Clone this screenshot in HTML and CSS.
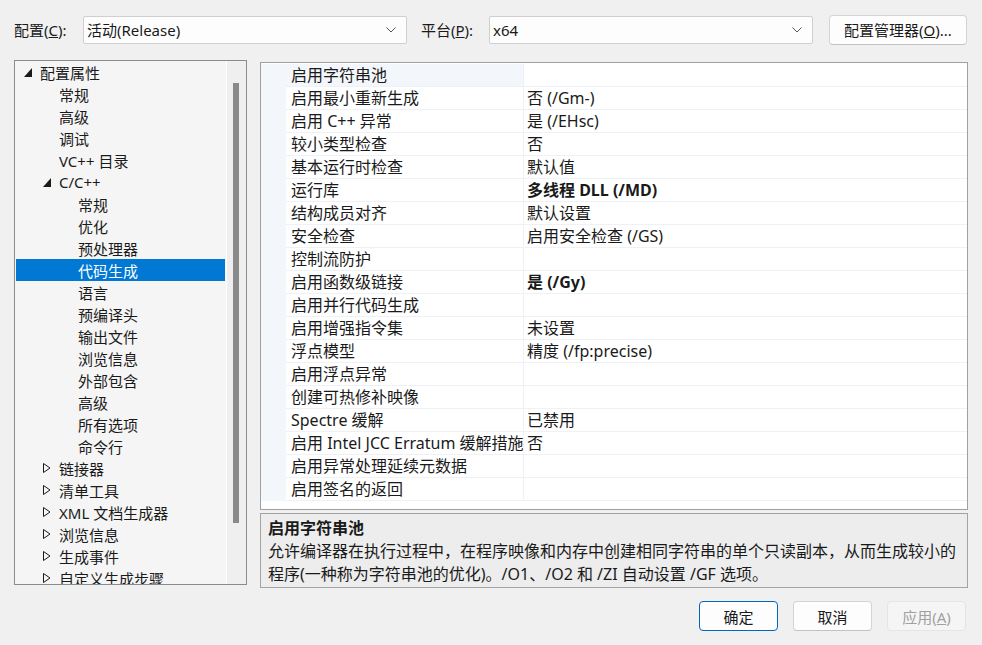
FILE: index.html
```html
<!DOCTYPE html>
<html lang="zh-CN">
<head>
    <meta charset="UTF-8">
    <title>代码生成 属性页</title>
    <link rel="stylesheet" href="styles.css">
</head>
<body>
    <div class="toolbar">
        <label class="tb-label">配置(<u>C</u>):</label>
        <div class="combo">
            <span>活动(Release)</span>
            <svg class="chev" width="10" height="6" viewBox="0 0 10 6"><polyline points="0.5,0.5 5,5 9.5,0.5" fill="none" stroke="#555" stroke-width="1"/></svg>
        </div>
        <label class="tb-label plat">平台(<u>P</u>):</label>
        <div class="combo">
            <span>x64</span>
            <svg class="chev" width="10" height="6" viewBox="0 0 10 6"><polyline points="0.5,0.5 5,5 9.5,0.5" fill="none" stroke="#555" stroke-width="1"/></svg>
        </div>
        <button class="btn cfg-btn">配置管理器(<u>O</u>)...</button>
    </div>

    <div class="main">
        <div class="tree">
            <div class="tree-rows">
                <div class="node lv0"><span class="tg"><svg width="8" height="9" viewBox="0 0 8 9"><polygon points="8,0 8,9 0,9" fill="#1a1a1a"/></svg></span>配置属性</div>
                <div class="node lv1"><span class="tg"></span>常规</div>
                <div class="node lv1"><span class="tg"></span>高级</div>
                <div class="node lv1"><span class="tg"></span>调试</div>
                <div class="node lv1"><span class="tg"></span>VC++ 目录</div>
                <div class="node lv1"><span class="tg"><svg width="8" height="9" viewBox="0 0 8 9"><polygon points="8,0 8,9 0,9" fill="#1a1a1a"/></svg></span>C/C++</div>
                <div class="node lv2"><span class="tg"></span>常规</div>
                <div class="node lv2"><span class="tg"></span>优化</div>
                <div class="node lv2"><span class="tg"></span>预处理器</div>
                <div class="node lv2 selected"><span class="tg"></span>代码生成</div>
                <div class="node lv2"><span class="tg"></span>语言</div>
                <div class="node lv2"><span class="tg"></span>预编译头</div>
                <div class="node lv2"><span class="tg"></span>输出文件</div>
                <div class="node lv2"><span class="tg"></span>浏览信息</div>
                <div class="node lv2"><span class="tg"></span>外部包含</div>
                <div class="node lv2"><span class="tg"></span>高级</div>
                <div class="node lv2"><span class="tg"></span>所有选项</div>
                <div class="node lv2"><span class="tg"></span>命令行</div>
                <div class="node lv1"><span class="tg"><svg width="8" height="10" viewBox="0 0 8 10"><polygon points="0.5,0.5 7,5 0.5,9.5" fill="none" stroke="#1a1a1a" stroke-width="1"/></svg></span>链接器</div>
                <div class="node lv1"><span class="tg"><svg width="8" height="10" viewBox="0 0 8 10"><polygon points="0.5,0.5 7,5 0.5,9.5" fill="none" stroke="#1a1a1a" stroke-width="1"/></svg></span>清单工具</div>
                <div class="node lv1"><span class="tg"><svg width="8" height="10" viewBox="0 0 8 10"><polygon points="0.5,0.5 7,5 0.5,9.5" fill="none" stroke="#1a1a1a" stroke-width="1"/></svg></span>XML 文档生成器</div>
                <div class="node lv1"><span class="tg"><svg width="8" height="10" viewBox="0 0 8 10"><polygon points="0.5,0.5 7,5 0.5,9.5" fill="none" stroke="#1a1a1a" stroke-width="1"/></svg></span>浏览信息</div>
                <div class="node lv1"><span class="tg"><svg width="8" height="10" viewBox="0 0 8 10"><polygon points="0.5,0.5 7,5 0.5,9.5" fill="none" stroke="#1a1a1a" stroke-width="1"/></svg></span>生成事件</div>
                <div class="node lv1"><span class="tg"><svg width="8" height="10" viewBox="0 0 8 10"><polygon points="0.5,0.5 7,5 0.5,9.5" fill="none" stroke="#1a1a1a" stroke-width="1"/></svg></span>自定义生成步骤</div>
            </div>
            <div class="vscroll"><div class="thumb"></div></div>
        </div>

        <div class="right">
            <div class="grid">
                <div class="row current"><div class="gut"></div><div class="name">启用字符串池</div><div class="val"></div></div>
                <div class="row"><div class="gut"></div><div class="name">启用最小重新生成</div><div class="val">否 (/Gm-)</div></div>
                <div class="row"><div class="gut"></div><div class="name">启用 C++ 异常</div><div class="val">是 (/EHsc)</div></div>
                <div class="row"><div class="gut"></div><div class="name">较小类型检查</div><div class="val">否</div></div>
                <div class="row"><div class="gut"></div><div class="name">基本运行时检查</div><div class="val">默认值</div></div>
                <div class="row"><div class="gut"></div><div class="name">运行库</div><div class="val bold">多线程 DLL (/MD)</div></div>
                <div class="row"><div class="gut"></div><div class="name">结构成员对齐</div><div class="val">默认设置</div></div>
                <div class="row"><div class="gut"></div><div class="name">安全检查</div><div class="val">启用安全检查 (/GS)</div></div>
                <div class="row"><div class="gut"></div><div class="name">控制流防护</div><div class="val"></div></div>
                <div class="row"><div class="gut"></div><div class="name">启用函数级链接</div><div class="val bold">是 (/Gy)</div></div>
                <div class="row"><div class="gut"></div><div class="name">启用并行代码生成</div><div class="val"></div></div>
                <div class="row"><div class="gut"></div><div class="name">启用增强指令集</div><div class="val">未设置</div></div>
                <div class="row"><div class="gut"></div><div class="name">浮点模型</div><div class="val">精度 (/fp:precise)</div></div>
                <div class="row"><div class="gut"></div><div class="name">启用浮点异常</div><div class="val"></div></div>
                <div class="row"><div class="gut"></div><div class="name">创建可热修补映像</div><div class="val"></div></div>
                <div class="row"><div class="gut"></div><div class="name">Spectre 缓解</div><div class="val">已禁用</div></div>
                <div class="row"><div class="gut"></div><div class="name">启用 Intel JCC Erratum 缓解措施</div><div class="val">否</div></div>
                <div class="row"><div class="gut"></div><div class="name">启用异常处理延续元数据</div><div class="val"></div></div>
                <div class="row"><div class="gut"></div><div class="name">启用签名的返回</div><div class="val"></div></div>
            </div>
            <div class="desc">
                <div class="desc-title">启用字符串池</div>
                <div class="desc-text">允许编译器在执行过程中，在程序映像和内存中创建相同字符串的单个只读副本，从而生成较小的程序(一种称为字符串池的优化)。/O1、/O2 和 /ZI 自动设置 /GF 选项。</div>
            </div>
        </div>
    </div>

    <div class="footer">
        <button class="btn default">确定</button>
        <button class="btn">取消</button>
        <button class="btn disabled">应用(<u>A</u>)</button>
    </div>
</body>
</html>
```

FILE: styles.css
```css
body {
    margin: 0;
    width: 982px;
    height: 645px;
    overflow: hidden;
    background-color: #f0f0f0;
    color: #1a1a1a;
    font-family: "Noto Sans", "Noto Sans CJK SC", sans-serif;
    font-size: 15px;
}

/* top bar */
.toolbar {
    display: flex;
    align-items: center;
    height: 59px;
    padding-left: 14px;
}

.tb-label {
    width: 69px;
}

.tb-label.plat {
    width: 68px;
    margin-left: 14px;
}

.combo {
    box-sizing: border-box;
    width: 324px;
    height: 28px;
    display: flex;
    align-items: center;
    justify-content: space-between;
    padding: 0 10px 0 3px;
    background-color: #fdfdfd;
    border: 1px solid #cfcfcf;
    border-radius: 2px;
}

.chev {
    display: block;
}

.btn {
    box-sizing: border-box;
    width: 79px;
    height: 30px;
    font-family: inherit;
    font-size: 15px;
    color: #1a1a1a;
    background-color: #fdfdfd;
    border: 1px solid #d4d4d4;
    border-bottom-color: #c2c2c2;
    border-radius: 4px;
    padding: 0;
}

.cfg-btn {
    width: 138px;
    margin-left: 16px;
}

/* main */
.main {
    display: flex;
    height: 530px;
}

.tree {
    box-sizing: border-box;
    width: 233px;
    height: 525px;
    margin-top: 1px;
    margin-left: 14px;
    border: 1px solid #878c93;
    background-color: #f5f5f5;
    display: flex;
    overflow: hidden;
}

.tree-rows {
    flex: 1;
    padding: 0 1px;
    border-right: 1px solid #ffffff;
    overflow: hidden;
}

.node {
    display: flex;
    align-items: center;
    height: 22px;
    white-space: nowrap;
}

.node.lv0 { padding-left: 8px; }
.node.lv1 { padding-left: 27px; }
.node.lv2 { padding-left: 46px; }

.node.selected {
    background-color: #0078d4;
    color: #ffffff;
}

.tg {
    width: 16px;
    flex-shrink: 0;
    display: flex;
    align-items: center;
}

.tg svg {
    display: block;
}

.vscroll {
    width: 19px;
    background-color: #efefef;
    position: relative;
}

.thumb {
    position: absolute;
    left: 6px;
    top: 22px;
    width: 6px;
    height: 440px;
    background-color: #8a8a8a;
}

.right {
    margin-left: 13px;
    width: 708px;
    padding-top: 3px;
}

.grid {
    box-sizing: border-box;
    height: 448px;
    padding-top: 1px;
    border: 1px solid #a0a0a0;
    background-color: #ffffff;
    font-size: 16px;
}

.row {
    display: flex;
    height: 23px;
    line-height: 23px;
}

.gut {
    width: 25px;
    flex-shrink: 0;
    background-color: #f3f6fb;
}

.name {
    box-sizing: border-box;
    width: 238px;
    flex-shrink: 0;
    padding-left: 5px;
    white-space: nowrap;
    overflow: hidden;
    border-bottom: 1px solid #eef1f6;
    border-right: 1px solid #eef1f6;
}

.val {
    flex: 1;
    padding-left: 3px;
    white-space: nowrap;
    border-bottom: 1px solid #eef1f6;
}

.row.current .name {
    background-color: #f3f6fb;
}

.bold {
    font-weight: bold;
}

.desc {
    box-sizing: border-box;
    height: 75px;
    margin-top: 3px;
    padding: 3px 8px 0 7px;
    border: 1px solid #a3a3a3;
    background-color: #ededed;
    font-size: 16px;
    line-height: 23px;
}

.desc-title {
    font-weight: bold;
}

/* bottom buttons */
.footer {
    display: flex;
    justify-content: flex-end;
    gap: 15px;
    padding: 12px 16px 0 0;
}

.btn.default {
    border: 1px solid #0067c0;
}

.btn.disabled {
    color: #a0a0a0;
    background-color: #f5f5f5;
    border-color: #e5e5e5;
}
```
